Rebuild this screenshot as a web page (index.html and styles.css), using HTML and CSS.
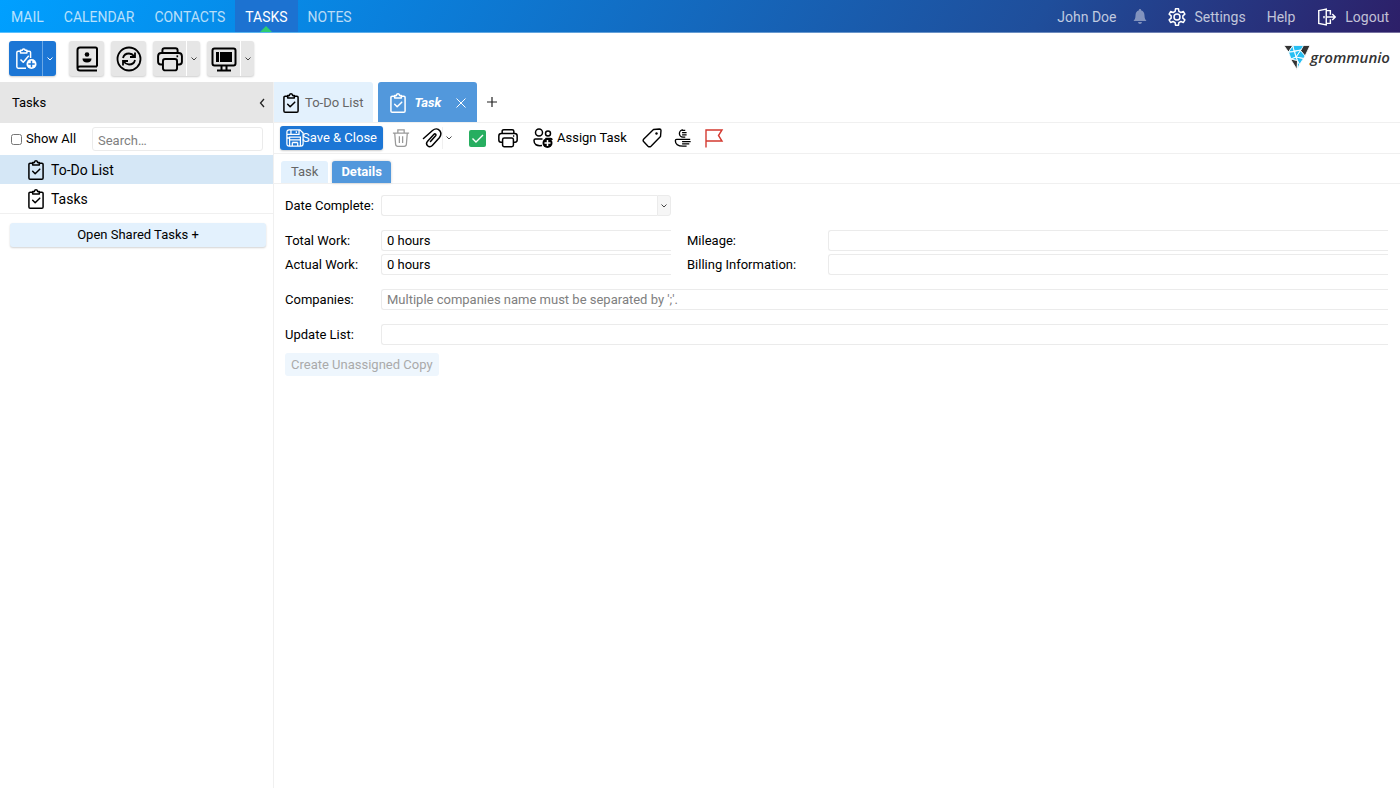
FILE: index.html
```html
<!DOCTYPE html>
<html lang="en">
<head>
<meta charset="utf-8">
<title>grommunio Web - Tasks</title>
<link rel="stylesheet" href="styles.css">
</head>
<body>
<svg class="sprite" aria-hidden="true">
  <symbol id="clipboard" viewBox="0 0 24 24" fill="none" stroke="currentColor" stroke-width="1.800" stroke-linecap="round" stroke-linejoin="round">
    <path d="M8 4H5Q3.500 4 3.500 5.500V21.500Q3.500 23 5 23H19Q20.500 23 20.500 21.500V5.500Q20.500 4 19 4H16"/>
    <path d="M8 6V3H10Q10.500 1 12 1T14 3H16V6Z"/><path d="M8 13.500l3 3 5.500-5.500"/>
  </symbol>
  <symbol id="printer" viewBox="0 0 24 24" fill="none" stroke="currentColor" stroke-width="1.800" stroke-linejoin="round">
    <path d="M5.500 17H3.500Q1 17 1 14.500V9.500Q1 6.500 4 6.500H20Q23 6.500 23 9.500V14.500Q23 17 20.500 17H18.500M5 6.500V4Q5 2 7 2H17Q19 2 19 4V6.500"/>
    <rect x="5.500" y="12" width="13" height="10.500" rx="2"/><path d="M18 9.500h1.500"/>
  </symbol>
  <symbol id="down" viewBox="0 0 8 8" fill="none" stroke="currentColor" stroke-width="1"><path d="M1.500 2.500L4 5l2.500-2.500"/></symbol>
</svg>

<header class="topbar">
  <nav class="nav">
    <a href="#">MAIL</a><a href="#">CALENDAR</a><a href="#">CONTACTS</a><a href="#" class="current">TASKS</a><a href="#">NOTES</a>
  </nav>
  <div class="account">
    <a href="#">John Doe</a>
    <button class="bell" aria-label="Reminders"><svg class="i14" viewBox="0 0 14 16" fill="currentColor"><path d="M7 0a1 1 0 0 1 1 1.300C10.500 2 11.500 4 11.500 6.500c0 3 1 4.300 2 5.500H.5c1-1.200 2-2.500 2-5.500C2.500 4 3.500 2 6 1.300A1 1 0 0 1 7 0zM5 13h4q-.3 2-2 2t-2-2z"/></svg></button>
    <a href="#" class="settings"><svg class="i18" viewBox="0 0 24 24" fill="none" stroke="#fff" stroke-width="2" stroke-linejoin="round"><path d="M9.500 4.500L10 1h4l.5 3.500 2.700 1.500 3.300-1.300 2 3.500-2.700 2.200v3.200l2.700 2.200-2 3.500-3.300-1.300-2.700 1.500L14 23h-4l-.5-3.500L6.800 18l-3.300 1.300-2-3.500 2.700-2.200v-3.200L1.500 8.200l2-3.500L6.800 6z"/><circle cx="12" cy="12" r="4"/></svg>Settings</a>
    <a href="#">Help</a>
    <a href="#" class="logout"><svg class="i18" viewBox="0 0 24 24" fill="none" stroke="#fff" stroke-width="1.900"><path d="M1 3.500L11 1.500V22.500L1 20.500ZM11 3.500h5.500V9M11 20.500h5.500V15M12 12h11M19 8l4 4-4 4"/><path d="M8 10.500v3"/></svg>Logout</a>
  </div>
</header>

<div class="actions">
  <div class="tools">
    <div class="split primary">
      <button class="face" aria-label="New task"><svg class="i22" viewBox="0 0 24 24" fill="none" stroke="currentColor" stroke-width="1.600" stroke-linejoin="round"><path d="M6 3.500H3.500Q2 3.500 2 5V20.500Q2 22 3.500 22H12M13 3.500h2.500Q17 3.500 17 5v6"/><path d="M6 5.500v-3h2Q8 1 9.500 1T11 2.500h2v3Z"/><path d="M6 12.500l3 3 6-7"/><circle cx="18" cy="17.500" r="5.500" fill="currentColor" stroke="none"/><path d="M18 14v7M14.500 17.500h7" stroke="#1c76d5"/></svg></button>
      <button class="more" aria-label="More new items"><svg class="i8"><use href="#down"/></svg></button>
    </div>
    <button class="tool" aria-label="Address book"><svg class="i26" viewBox="0 0 26 26" fill="none" stroke="currentColor" stroke-width="2"><path d="M23 20.500V3Q23 1.500 21.500 1.500H6Q3.500 1.500 3.500 4V22Q3.500 24.500 6 24.500H23M3.500 22Q3.500 20.500 6 20.500H23"/><circle cx="13" cy="8.500" r="2.300" fill="currentColor" stroke="none"/><path d="M8.500 12.500h9q0 4-4.500 4t-4.500-4z" fill="currentColor" stroke="none"/></svg></button>
    <button class="tool" aria-label="Refresh"><svg class="i26" viewBox="0 0 26 26" fill="none" stroke="currentColor" stroke-width="1.800"><circle cx="13" cy="13" r="11.500"/><path d="M7 12Q8 7.500 13 7.500q3 0 5.500 3M19 6.500v4.500h-5M19 14q-1 4.500-6 4.500-3 0-5.500-3M7 19.500V15h5"/></svg></button>
    <div class="split">
      <button class="face" aria-label="Print"><svg class="i26"><use href="#printer"/></svg></button>
      <button class="more" aria-label="Print options"><svg class="i8"><use href="#down"/></svg></button>
    </div>
    <div class="split">
      <button class="face" aria-label="View"><svg class="i26" viewBox="0 0 26 26" fill="none" stroke="currentColor" stroke-width="2"><rect x="1.500" y="2.500" width="23" height="17" rx="2"/><path d="M5 6h3v10H5zM9 6h12v10H9z" fill="currentColor" stroke="none"/><path d="M10.500 20v4M15.500 20v4M6 24.500h14"/></svg></button>
      <button class="more" aria-label="View options"><svg class="i8"><use href="#down"/></svg></button>
    </div>
  </div>
  <a href="#" class="brand"><svg class="mark" viewBox="0 0 26 25" stroke="#fff" stroke-width=".8"><path fill="#333" d="M0 .5h9L4.500 7zM19 .5h7L21 11 16.500 5.500zM6.500 14l7 1.500L13 24.500z"/><path fill="#27bff3" d="M9 .5h10.500L17 5l-7 1zM8.500 1l2 5.500-6 .5zM4.500 7l6-.5L12 12l-5 2zM10.500 6.500L17 5l-5 7zM16.500 5.500L21 11l-1.500 2.500L12 12zM12 12l7.500 1.500-4 6-2-4zM7 14l5-2 1.500 3.500zM13.500 16l2 3.500-2 5z"/></svg><span>grommunio</span></a>
</div>

<div class="workspace">
  <aside class="sidebar">
    <div class="side-head"><span>Tasks</span><button aria-label="Collapse"><svg class="i10" viewBox="0 0 10 10" fill="none" stroke="#222" stroke-width="1.300"><path d="M7 1L3.500 5 7 9"/></svg></button></div>
    <div class="filter">
      <label><input type="checkbox"> Show All</label>
      <input type="text" class="search" placeholder="Search…" aria-label="Search">
    </div>
    <nav class="folders">
      <a href="#" class="selected"><svg class="i20"><use href="#clipboard"/></svg>To-Do List</a>
      <a href="#"><svg class="i20"><use href="#clipboard"/></svg>Tasks</a>
    </nav>
    <button class="shared">Open Shared Tasks +</button>
  </aside>

  <main class="main">
    <div class="tabs">
      <button class="tab"><svg class="i20"><use href="#clipboard"/></svg>To-Do List</button>
      <div class="tab active"><button class="tab-name"><svg class="i20"><use href="#clipboard"/></svg>Task</button><button class="close" aria-label="Close tab"><svg class="i12" viewBox="0 0 12 12" stroke="#fff" stroke-width="1"><path d="M1.500 1.500l9 9M10.500 1.500l-9 9"/></svg></button></div>
      <button class="add" aria-label="New tab"><svg class="i10" viewBox="0 0 10 10" stroke="#222" stroke-width="1.200"><path d="M5 0v10M0 5h10"/></svg></button>
    </div>

    <div class="toolbar">
      <button class="save"><svg class="i18" viewBox="0 0 20 20" fill="none" stroke="currentColor" stroke-width="1.400"><path d="M3.500 1H15.500L19 4.500V16.500Q19 19 16.500 19H3.500Q1 19 1 16.500V3.500Q1 1 3.500 1ZM5.500 1V6H14.500V1M4 19V9H16V19M4 12h12M7 15h6M7 15v4M13 15v4M11.500 2.500v2M1 6h4.500M1 10h3"/></svg><span>Save &amp; Close</span></button>
      <button aria-label="Delete" class="dim"><svg class="i18" viewBox="0 0 20 20" fill="none" stroke="currentColor" stroke-width="1.400"><path d="M1 4.500H19M6.500 4.500V1H13.500V4.500M3 4.500L4 17Q4.200 19.300 6.500 19.300H13.500Q15.800 19.300 16 17L17 4.500M8.200 8v7.500M11.800 8v7.500"/></svg></button>
      <div class="attach">
        <button aria-label="Attach"><svg class="i20" viewBox="0 0 20 20" fill="none" stroke="currentColor" stroke-width="1.500" stroke-linecap="round"><path d="M1.500 10.500L10.500 2.500C13 .5 16 .5 17.800 2.700C19.500 5 19 7.500 17.300 9.700L10.300 17.500C8.800 19 7 19 5.600 17.700C4.200 16.300 4.400 14.500 5.600 13.200L12 6.300C13 5.300 14.600 6.500 13.600 7.700L8.500 13.500"/></svg></button>
        <button aria-label="Attachment options" class="arrow"><svg class="i8"><use href="#down"/></svg></button>
      </div>
      <button aria-label="Mark complete"><svg class="i18" viewBox="0 0 18 18"><rect x="1" y="1" width="17" height="17" rx="2" fill="#27ae60"/><path d="M4.500 9.500l3.500 3.500L15 6" fill="none" stroke="#fff" stroke-width="1.400"/></svg></button>
      <button aria-label="Print task"><svg class="i20"><use href="#printer"/></svg></button>
      <button class="assign"><svg class="i20" viewBox="0 0 20 20" fill="none" stroke="currentColor" stroke-width="1.500"><circle cx="6" cy="4.500" r="3.500"/><circle cx="15" cy="5.500" r="2.500"/><path d="M9 17.500Q1 18.500 1 12.500Q1 11 2.500 11H9.500M12.500 10.500H17.500Q19 10.500 19 12"/><circle cx="14.500" cy="15" r="5" fill="currentColor" stroke="none"/><path d="M14.500 12v6M11.500 15h6" stroke="#fff"/></svg>Assign Task</button>
      <button aria-label="Categories"><svg class="i20" viewBox="0 0 20 20" fill="none" stroke="currentColor" stroke-width="1.400" stroke-linejoin="round"><path d="M11.500 1.500L17.500 1Q19 1 19 2.500L18.500 8.500L9 18.200Q7.500 19.500 6 18.200L1.800 13.800Q.5 12.500 1.800 11Z"/><circle cx="14.500" cy="5.500" r="1.200" fill="currentColor" stroke="none"/></svg></button>
      <button aria-label="Private"><svg class="i18" viewBox="0 0 20 20" fill="none" stroke="currentColor" stroke-width="1.500"><path d="M10 1A4 4 0 1 0 10 9M9 1.500h3.500M9 4h5M9 6.500h5M9 9h3.500M10 11.500H3Q1.500 11.500 1.500 13Q1.500 19 10 19M9 11.500h9M9 14h9.500M9 16.500h8M10 19h4"/></svg></button>
      <button aria-label="Flag" class="flag"><svg class="i20" viewBox="0 0 20 20" fill="none" stroke="currentColor" stroke-width="1.400"><path d="M2 19.500V2H18L14.500 7.500L18 13H2"/></svg></button>
    </div>

    <div class="subtabs">
      <button>Task</button><button class="active">Details</button>
    </div>

    <form class="form">
      <label for="date">Date Complete:</label>
      <div class="combo"><input id="date" type="text"><button type="button" aria-label="Pick date"><svg class="i8"><use href="#down"/></svg></button></div>

      <label for="total" class="gap">Total Work:</label>
      <input id="total" type="text" value="0 hours" class="gap">
      <label for="mileage" class="gap second">Mileage:</label>
      <input id="mileage" type="text" class="gap">

      <label for="actual" class="tight">Actual Work:</label>
      <input id="actual" type="text" value="0 hours" class="tight">
      <label for="billing" class="tight second">Billing Information:</label>
      <input id="billing" type="text" class="tight">

      <label for="companies" class="gap">Companies:</label>
      <input id="companies" type="text" class="gap wide" placeholder="Multiple companies name must be separated by ';'.">

      <label for="update" class="gap">Update List:</label>
      <input id="update" type="text" class="gap wide">

      <button type="button" class="copy" disabled>Create Unassigned Copy</button>
    </form>
  </main>
</div>
</body>
</html>
```

FILE: styles.css
```css
* { box-sizing: border-box; }
body {
  margin: 0;
  min-height: 100vh;
  display: flex;
  flex-direction: column;
  font: 13px/16px Roboto, "Liberation Sans", sans-serif;
  color: #000;
  background: #fff;
}
a { color: inherit; text-decoration: none; }
button {
  display: flex;
  align-items: center;
  justify-content: center;
  padding: 0;
  border: 0;
  background: none;
  font: inherit;
  color: inherit;
  cursor: pointer;
}
input { font: inherit; color: inherit; }
input::placeholder { color: #808080; opacity: 1; }
svg { flex: none; display: block; }
.sprite { position: absolute; width: 0; height: 0; }
.i8 { width: 8px; height: 8px; }
.i10 { width: 10px; height: 10px; }
.i12 { width: 12px; height: 12px; }
.i14 { width: 14px; height: 16px; }
.i18 { width: 18px; height: 18px; }
.i20 { width: 20px; height: 20px; }
.i22 { width: 22px; height: 22px; }
.i26 { width: 26px; height: 26px; }

/* Top navigation */
.topbar {
  display: flex;
  justify-content: space-between;
  height: 33px;
  font-size: 14px;
  color: rgba(255, 255, 255, .72);
  background: linear-gradient(120deg, #00a0ff 0%, #0a80dc 28%, #1f4e9b 74%, #2d1f68 100%);
  border-bottom: 1px solid rgba(255, 255, 255, .35);
}
.nav, .account { display: flex; }
.nav { padding-left: 1px; }
.nav a { display: flex; align-items: center; padding: 1px 10px 0; position: relative; }
.nav .current { color: #fff; background: #1c72d1; }
.nav .current::after {
  content: "";
  position: absolute;
  left: 50%;
  bottom: 0;
  margin-left: -6px;
  border: 6px solid transparent;
  border-top: 0;
  border-bottom-color: #2ecc71;
}
.account { align-items: center; padding: 1px 11px 0 0; }
.account a { display: flex; align-items: center; }
.bell { margin: 0 21px 0 16px; opacity: .6; }
.settings { gap: 9px; margin-right: 21px; }
.logout { gap: 9px; margin-left: 23px; }

/* Main actions */
.actions {
  display: flex;
  justify-content: space-between;
  height: 49px;
  padding: 8px 10px 0 9px;
}
.tools { display: flex; gap: 7px; }
.tool, .split {
  height: 35px;
  background: #e6e6e6;
  border-radius: 3px;
  box-shadow: 0 1px 2px rgba(0, 0, 0, .2);
}
.tool { width: 35px; }
.split { display: flex; }
.split .face { width: 34px; border-right: 1px solid #fff; }
.split .more { width: 13px; color: #444; }
.split.primary { background: #1c76d5; color: #fff; margin-right: 6px; }
.split.primary .face { border-right-color: #6ba8e6; }
.split.primary .more { color: #fff; }
.brand { display: flex; height: 32px; align-items: center; color: #333; font: italic 600 15px/20px "Open Sans", sans-serif; }
.mark { width: 26px; height: 25px; }

/* Sidebar */
.workspace { display: flex; flex: 1; }
.sidebar { flex: none; width: 274px; border-right: 1px solid #f0f0f0; }
.side-head {
  display: flex;
  align-items: center;
  justify-content: space-between;
  height: 41px;
  padding: 0 6px 0 12px;
  background: #e6e6e6;
}
.filter { display: flex; align-items: center; justify-content: space-between; height: 32px; padding: 0 10px 0 11px; }
.filter label { display: flex; align-items: center; gap: 4px; }
.filter input[type=checkbox] { width: 11px; height: 11px; margin: 0; }
.search { width: 171px; height: 24px; padding: 2px 5px 0; border: 1px solid #ebebeb; border-radius: 3px; }
.folders { border-bottom: 1px solid #f0f0f0; font-size: 14px; }
.folders a { display: flex; align-items: center; gap: 5px; height: 29px; padding-left: 26px; }
.folders .selected { background: #d5e7f6; }
.shared {
  width: calc(100% - 17px);
  height: 24px;
  margin: 9px 7px 0 10px;
  border-radius: 3px;
  background: #e3f1fd;
  box-shadow: 0 1px 2px rgba(0, 0, 0, .18);
}

/* Document tabs */
.main { flex: 1; min-width: 0; }
.tabs { display: flex; height: 41px; border-bottom: 1px solid #f0f0f0; }
.tab {
  display: flex;
  align-items: center;
  gap: 4px;
  height: 40px;
  padding: 2px 10px 0 7px;
  margin-right: 5px;
  border-radius: 0 3px 0 0;
  background: #e3f1fd;
  color: #666;
}
.tab > svg { color: #000; }
.tab.active { padding: 2px 10px 0; border-radius: 3px 3px 0 0; background: #5298dc; color: #fff; }
.tab-name { gap: 6px; font-weight: 700; font-style: italic; }
.close { margin-left: 10px; }
.add { width: 20px; height: 40px; }

/* Task toolbar */
.toolbar { display: flex; align-items: center; gap: 12px; height: 31px; padding-left: 6px; border-bottom: 1px solid #f0f0f0; }
.save {
  height: 24px;
  margin-right: -3px;
  padding: 0 6px;
  border-radius: 3px;
  background: #1c76d5;
  color: #fff;
  box-shadow: 0 1px 2px rgba(0, 0, 0, .2);
}
.save svg { margin-right: -2px; }
.dim { color: #999; }
.attach { display: flex; align-items: center; }
.arrow { width: 14px; height: 22px; border-left: 1px solid #f0f0f0; color: #444; }
.assign { gap: 4px; margin: 0 3px; }
.flag { color: #d43a31; }

/* Form tabs */
.subtabs { display: flex; align-items: flex-end; gap: 4px; height: 30px; padding-left: 7px; border-bottom: 1px solid #f0f0f0; }
.subtabs button { height: 22px; padding: 0 10px 1px; border-radius: 3px 3px 0 0; background: #e3f1fd; color: #666; }
.subtabs .active { padding: 0 9px 1px; background: #5298dc; color: #fff; font-weight: 700; box-shadow: 0 0 3px rgba(0, 0, 0, .2); }

/* Details form */
.form { display: grid; grid-template-columns: 96px 290px 157px 1fr; align-items: center; padding: 11px 12px 0 11px; }
.form > label { white-space: nowrap; }
.form input {
  width: 100%;
  min-width: 0;
  height: 21px;
  padding: 0 5px;
  border: 1px solid #ebebeb;
  border-right: 0;
  border-radius: 3px 0 0 3px;
}
.form .combo { display: flex; grid-column: 2 / 5; width: 290px; }
.combo button { flex: none; width: 14px; border: 1px solid #ebebeb; border-radius: 0 3px 3px 0; background: #f6f6f6; color: #444; }
.form .gap { margin-top: 14px; }
.form .tight { margin-top: 3px; }
.second { padding-left: 16px; }
.form .wide { grid-column: 2 / 5; }
.copy {
  grid-column: 1 / 3;
  justify-self: start;
  height: 23px;
  margin-top: 8px;
  padding: 0 6px;
  border-radius: 3px;
  background: #eef6fd;
  color: #aaa;
}
```
